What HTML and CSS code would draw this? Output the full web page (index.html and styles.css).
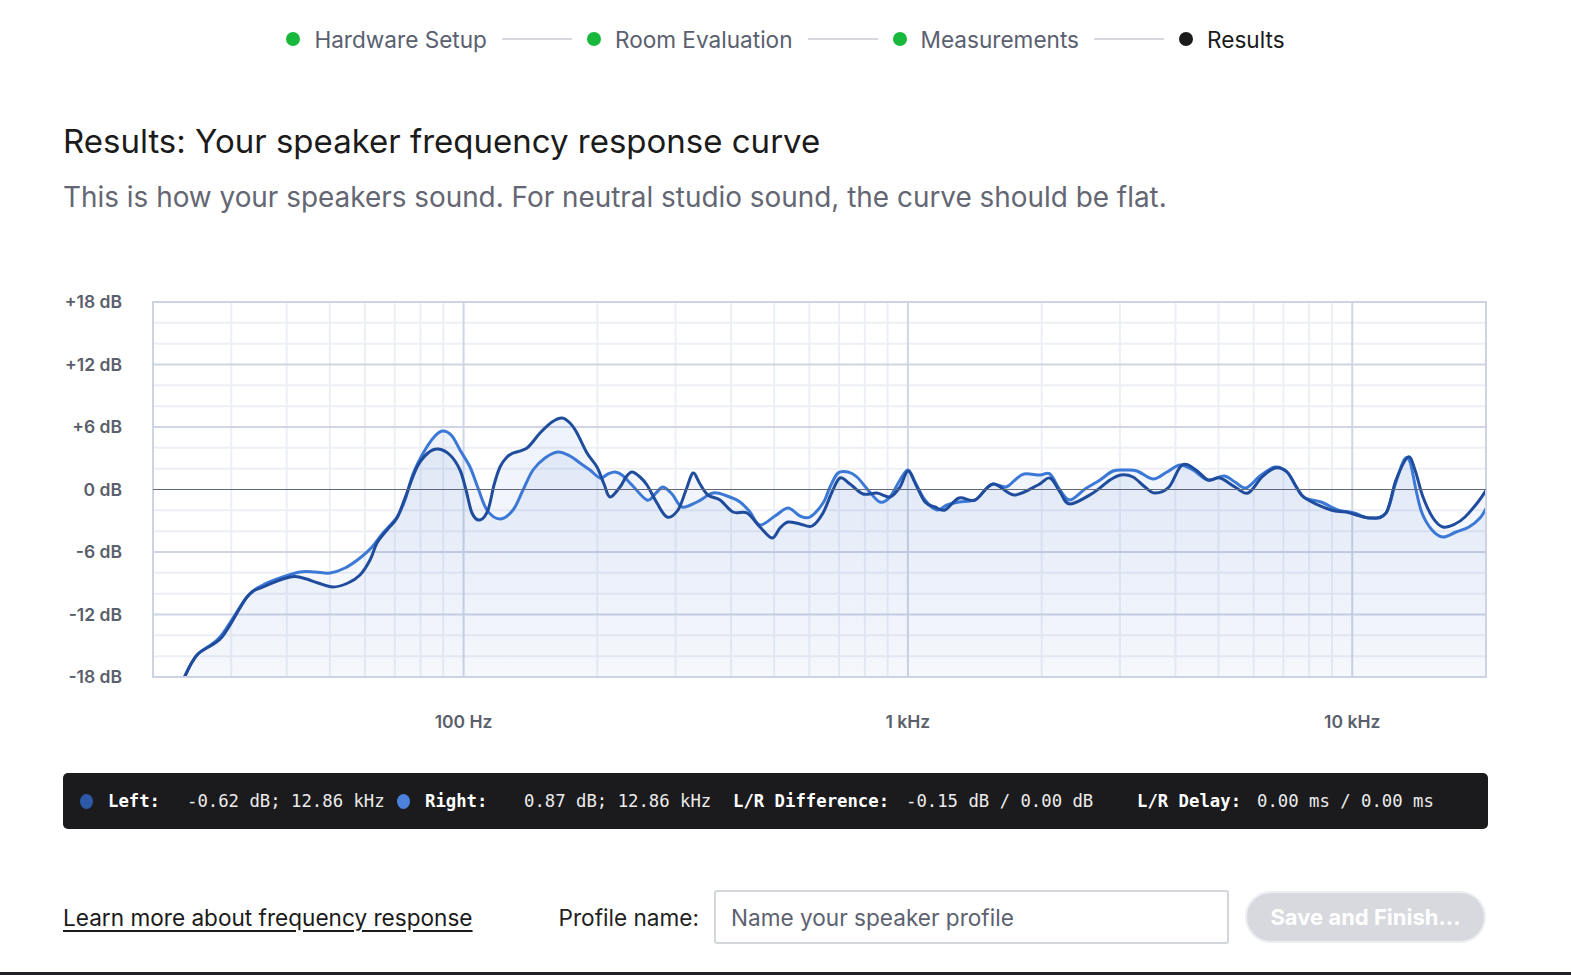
FILE: index.html
```html
<!DOCTYPE html>
<html lang="en">
<head>
<meta charset="UTF-8">
<meta name="viewport" content="width=device-width, initial-scale=1.0">
<title>Speaker Calibration - Results</title>
<link rel="stylesheet" href="styles.css">
</head>
<body>

<div class="steps">
    <div class="step done"><span class="step-dot"></span>Hardware Setup</div>
    <div class="step-line"></div>
    <div class="step done"><span class="step-dot"></span>Room Evaluation</div>
    <div class="step-line"></div>
    <div class="step done"><span class="step-dot"></span>Measurements</div>
    <div class="step-line"></div>
    <div class="step current"><span class="step-dot"></span>Results</div>
</div>

<div class="content">
    <h1>Results: Your speaker frequency response curve</h1>
    <p class="lead">This is how your speakers sound. For neutral studio sound, the curve should be flat.</p>

    <!-- viewBox uses page pixels so the traced points line up -->
    <svg id="chart" class="chart" viewBox="63 290 1425 450"></svg>

    <div class="readout">
        <span class="readout-dot left"></span>
        <span class="readout-key key-left">Left:</span>
        <span class="readout-val val-left">-0.62 dB; 12.86 kHz</span>
        <span class="readout-dot right"></span>
        <span class="readout-key key-right">Right:</span>
        <span class="readout-val val-right">0.87 dB; 12.86 kHz</span>
        <span class="readout-key key-diff">L/R Difference:</span>
        <span class="readout-val val-diff">-0.15 dB / 0.00 dB</span>
        <span class="readout-key key-delay">L/R Delay:</span>
        <span class="readout-val">0.00 ms / 0.00 ms</span>
    </div>

    <div class="footer-row">
        <a href="#" class="learn-link">Learn more about frequency response</a>
        <div class="profile">
            <label class="profile-label" for="profile-name">Profile name:</label>
            <input id="profile-name" class="profile-input" type="text" placeholder="Name your speaker profile">
            <button class="save-button" disabled>Save and Finish...</button>
        </div>
    </div>
</div>

<div class="taskbar"></div>

<script src="chart.js"></script>
</body>
</html>
```

FILE: styles.css
```css
body {
    font-family: Inter, "Noto Sans", sans-serif;
    background-color: #fff;
    color: #1b1b1b;
    margin: 0;
    min-height: 100vh;
    display: flex;
    flex-direction: column;
}
.steps {
    display: flex;
    justify-content: center;
    align-items: center;
    height: 30px;
    margin-top: 24px;
}
.step {
    display: flex;
    align-items: center;
    font-size: 22.6px;
    color: #5a6070;
}
.step-dot {
    width: 14px;
    height: 14px;
    border-radius: 50%;
    background-color: #17b83b;
    margin-right: 14px;
}
.step.current {
    color: #1b1b1b;
}
.step.current .step-dot {
    background-color: #1b1b1b;
}
.step-line {
    width: 70px;
    height: 2px;
    background-color: #d6d8dd;
    margin: 0 15px;
}
.content {
    margin: 0 83px 0 63px;
}
h1 {
    font-size: 33px;
    font-weight: 400;
    line-height: 40px;
    margin: 67px 0 0;
}
.lead {
    font-size: 27.9px;
    line-height: 32px;
    color: #646773;
    margin: 20px 0 0;
}
.chart {
    display: block;
    width: 1425px;
    height: 450px;
    margin-top: 77px;
}
.axis-label {
    font-family: Inter, "Noto Sans", sans-serif;
    font-size: 17.5px;
    font-weight: 600;
    fill: #5a5f6c;
}
/* live readout under the chart */
.readout {
    display: flex;
    align-items: center;
    height: 56px;
    margin-top: 33px;
    padding-left: 17px;
    background-color: #1b1b1d;
    border-radius: 5px;
    color: #ececec;
    font-family: "DejaVu Sans Mono", "Liberation Mono", monospace;
    font-size: 17.3px;
    white-space: pre;
}
.readout span {
    flex: none;
}
.readout-dot {
    width: 13px;
    height: 15px;
    border-radius: 50%;
    margin-right: 15px;
}
.readout-dot.left {
    background-color: #2d5aa8;
}
.readout-dot.right {
    background-color: #4c82db;
}
.readout-key {
    font-weight: bold;
    color: #fff;
}
.key-left { width: 79px; }
.val-left { width: 210px; }
.key-right { width: 99px; }
.val-right { width: 209px; }
.key-diff { width: 173px; }
.val-diff { width: 231px; }
.key-delay { width: 120px; }
.footer-row {
    display: flex;
    align-items: center;
    margin-top: 61px;
}
.learn-link {
    font-size: 22.6px;
    color: #1b1b1b;
    text-decoration: underline;
    text-underline-offset: 4px;
}
.profile {
    display: flex;
    align-items: center;
    margin-left: auto;
    margin-right: 2px;
}
.profile-label {
    font-size: 22.6px;
    color: #222;
    margin-right: 15px;
}
.profile-input {
    box-sizing: border-box;
    width: 515px;
    height: 54px;
    padding: 0 15px;
    border: 2px solid #d3d6db;
    border-radius: 3px;
    font-family: Inter, "Noto Sans", sans-serif;
    font-size: 22.6px;
    color: #1b1b1b;
}
.profile-input::placeholder {
    color: #5c6270;
}
.save-button {
    box-sizing: border-box;
    width: 241px;
    height: 52px;
    margin-left: 16px;
    border: 2px solid #eceef1;
    border-radius: 26px;
    background-color: #d7d9de;
    color: #fff;
    font-family: Inter, "Noto Sans", sans-serif;
    font-size: 22px;
    font-weight: bold;
}
.taskbar {
    margin-top: auto;
    height: 3px;
    background-color: #202124;
}
```

FILE: chart.js
```js
const svgNS = 'http://www.w3.org/2000/svg';
const chart = document.getElementById('chart');

// plot area, in page pixels (20 Hz .. 20 kHz, -18 .. +18 dB)
const plot = { left: 153, right: 1486, top: 302, bottom: 677 };
const decade = (plot.right - plot.left) / 3;

function xOf(freq) {
    return plot.left + Math.log10(freq / 20) * decade;
}
function yOf(db) {
    return plot.top + (18 - db) * (plot.bottom - plot.top) / 36;
}

function add(tag, attrs, parent) {
    const el = document.createElementNS(svgNS, tag);
    for (const key in attrs) el.setAttribute(key, attrs[key]);
    (parent || chart).appendChild(el);
    return el;
}

// traced from the measurement, [x, y]
const rightCurve = [
    [183, 680], [197, 655], [220, 637], [247, 597], [263, 585], [280, 578], [300, 572], [315, 572],
    [330, 573], [345, 568], [360, 558], [372, 547], [383, 533], [397, 517], [405, 500], [413, 474],
    [425, 450], [435, 436], [443, 431], [452, 436], [460, 450], [470, 467], [478, 488], [487, 510],
    [500, 519], [513, 510], [523, 490], [533, 470], [545, 458], [558, 452], [570, 456], [580, 463],
    [590, 470], [600, 478], [608, 474], [615, 472], [622, 475], [632, 485], [647, 500], [656, 493],
    [663, 487], [672, 494], [682, 507], [697, 502], [713, 493], [727, 496], [740, 502], [750, 512],
    [760, 525], [775, 516], [788, 508], [800, 516], [810, 517], [823, 503], [830, 487], [838, 473],
    [848, 472], [857, 477], [868, 490], [880, 502], [890, 497], [900, 480], [908, 470], [915, 482],
    [925, 500], [937, 510], [947, 505], [959, 502], [975, 500], [985, 490], [993, 484], [1006, 487],
    [1015, 480], [1024, 474], [1040, 475], [1050, 474], [1060, 490], [1070, 500], [1085, 489],
    [1100, 480], [1113, 471], [1125, 470], [1137, 471], [1153, 479], [1167, 472], [1180, 465],
    [1193, 470], [1208, 480], [1224, 476], [1235, 482], [1246, 488], [1260, 476], [1275, 467],
    [1287, 472], [1297, 488], [1305, 498], [1321, 502], [1338, 510], [1354, 513], [1370, 518],
    [1386, 513], [1395, 485], [1404, 460], [1410, 462], [1416, 490], [1422, 513], [1432, 530],
    [1443, 537], [1456, 532], [1469, 527], [1480, 518], [1487, 507]
];

const leftCurve = [
    [183, 680], [197, 655], [222, 637], [247, 597], [263, 587], [290, 577], [303, 578], [318, 583],
    [333, 587], [348, 583], [360, 575], [370, 560], [377, 543], [387, 530], [397, 518], [405, 498],
    [417, 467], [428, 453], [438, 449], [450, 455], [460, 470], [466, 490], [472, 513], [480, 520],
    [488, 510], [494, 485], [500, 467], [507, 457], [513, 453], [527, 448], [540, 433], [552, 422],
    [562, 418], [570, 423], [577, 433], [587, 453], [597, 467], [604, 484], [610, 497], [620, 487],
    [626, 477], [632, 472], [640, 477], [647, 485], [657, 503], [667, 517], [678, 510], [686, 490],
    [693, 473], [700, 484], [708, 495], [720, 500], [733, 512], [747, 513], [760, 527], [772, 538],
    [780, 528], [788, 522], [800, 524], [812, 526], [823, 513], [832, 492], [840, 478], [850, 484],
    [863, 494], [877, 493], [890, 497], [900, 487], [908, 471], [916, 485], [925, 502], [935, 507],
    [945, 510], [959, 498], [975, 500], [993, 484], [1014, 495], [1038, 485], [1050, 478], [1060, 492],
    [1070, 504], [1093, 493], [1110, 480], [1121, 475], [1133, 477], [1145, 487], [1155, 493],
    [1169, 487], [1182, 465], [1196, 470], [1208, 480], [1220, 478], [1235, 487], [1248, 493],
    [1262, 477], [1275, 468], [1287, 472], [1297, 488], [1305, 498], [1331, 510], [1346, 512],
    [1370, 518], [1386, 513], [1396, 480], [1408, 457], [1415, 470], [1423, 497], [1433, 518],
    [1443, 527], [1455, 524], [1465, 517], [1478, 502], [1487, 489]
];

// catmull-rom -> cubic bezier
function smoothPath(pts) {
    let d = `M${pts[0][0]},${pts[0][1]}`;
    for (let i = 0; i < pts.length - 1; i++) {
        const p0 = pts[i - 1] || pts[i];
        const p1 = pts[i];
        const p2 = pts[i + 1];
        const p3 = pts[i + 2] || p2;
        const c1x = p1[0] + (p2[0] - p0[0]) / 6;
        const c1y = p1[1] + (p2[1] - p0[1]) / 6;
        const c2x = p2[0] - (p3[0] - p1[0]) / 6;
        const c2y = p2[1] - (p3[1] - p1[1]) / 6;
        d += ` C${c1x.toFixed(1)},${c1y.toFixed(1)} ${c2x.toFixed(1)},${c2y.toFixed(1)} ${p2[0]},${p2[1]}`;
    }
    return d;
}

// defs: clip to the plot, soft fill under the curves
const defs = add('defs', {});
const clip = add('clipPath', { id: 'plot-clip' }, defs);
add('rect', { x: plot.left, y: plot.top, width: plot.right - plot.left, height: plot.bottom - plot.top }, clip);
const grad = add('linearGradient', { id: 'fill-grad', x1: 0, y1: 0, x2: 0, y2: 1 }, defs);
add('stop', { offset: '0%', 'stop-color': '#3d6fca', 'stop-opacity': 0.09 }, grad);
add('stop', { offset: '100%', 'stop-color': '#3d6fca', 'stop-opacity': 0.025 }, grad);

// minor grid
const minorFreqs = [];
[10, 100, 1000].forEach(base => {
    for (let m = 2; m <= 9; m++) {
        if (base * m !== 20) minorFreqs.push(base * m);
    }
});
minorFreqs.forEach(f => {
    const x = xOf(f);
    add('line', { x1: x, y1: plot.top, x2: x, y2: plot.bottom, stroke: '#eceff5', 'stroke-width': 2 });
});
for (let db = -16; db <= 16; db += 2) {
    if (db % 6 === 0) continue;
    add('line', { x1: plot.left, y1: yOf(db), x2: plot.right, y2: yOf(db), stroke: '#eceff5', 'stroke-width': 2 });
}

// major grid
[100, 1000, 10000].forEach(f => {
    const x = xOf(f);
    add('line', { x1: x, y1: plot.top, x2: x, y2: plot.bottom, stroke: '#cfd5e3', 'stroke-width': 2 });
});
[-12, -6, 6, 12].forEach(db => {
    add('line', { x1: plot.left, y1: yOf(db), x2: plot.right, y2: yOf(db), stroke: '#cfd5e3', 'stroke-width': 2 });
});

// fills
const curves = add('g', { 'clip-path': 'url(#plot-clip)' });
[leftCurve, rightCurve].forEach(pts => {
    const last = pts[pts.length - 1];
    add('path', {
        d: smoothPath(pts) + ` L${last[0]},${plot.bottom} L${pts[0][0]},${plot.bottom} Z`,
        fill: 'url(#fill-grad)'
    }, curves);
});

// frame and zero line
add('rect', {
    x: plot.left, y: plot.top, width: plot.right - plot.left, height: plot.bottom - plot.top,
    fill: 'none', stroke: '#cdd3e2', 'stroke-width': 2
});
add('line', { x1: plot.left, y1: yOf(0), x2: plot.right, y2: yOf(0), stroke: '#60677a', 'stroke-width': 1.2 });

// curves
add('path', { d: smoothPath(rightCurve), fill: 'none', stroke: '#3c79d7', 'stroke-width': 3, 'stroke-linejoin': 'round' }, curves);
add('path', { d: smoothPath(leftCurve), fill: 'none', stroke: '#1f4c9c', 'stroke-width': 3, 'stroke-linejoin': 'round' }, curves);

// labels
[18, 12, 6, 0, -6, -12, -18].forEach(db => {
    const text = add('text', { x: 122, y: yOf(db) + 6, 'text-anchor': 'end', class: 'axis-label' });
    text.textContent = (db > 0 ? '+' : '') + db + ' dB';
});
[[100, '100 Hz'], [1000, '1 kHz'], [10000, '10 kHz']].forEach(([f, label]) => {
    const text = add('text', { x: xOf(f), y: 728, 'text-anchor': 'middle', class: 'axis-label' });
    text.textContent = label;
});
```
